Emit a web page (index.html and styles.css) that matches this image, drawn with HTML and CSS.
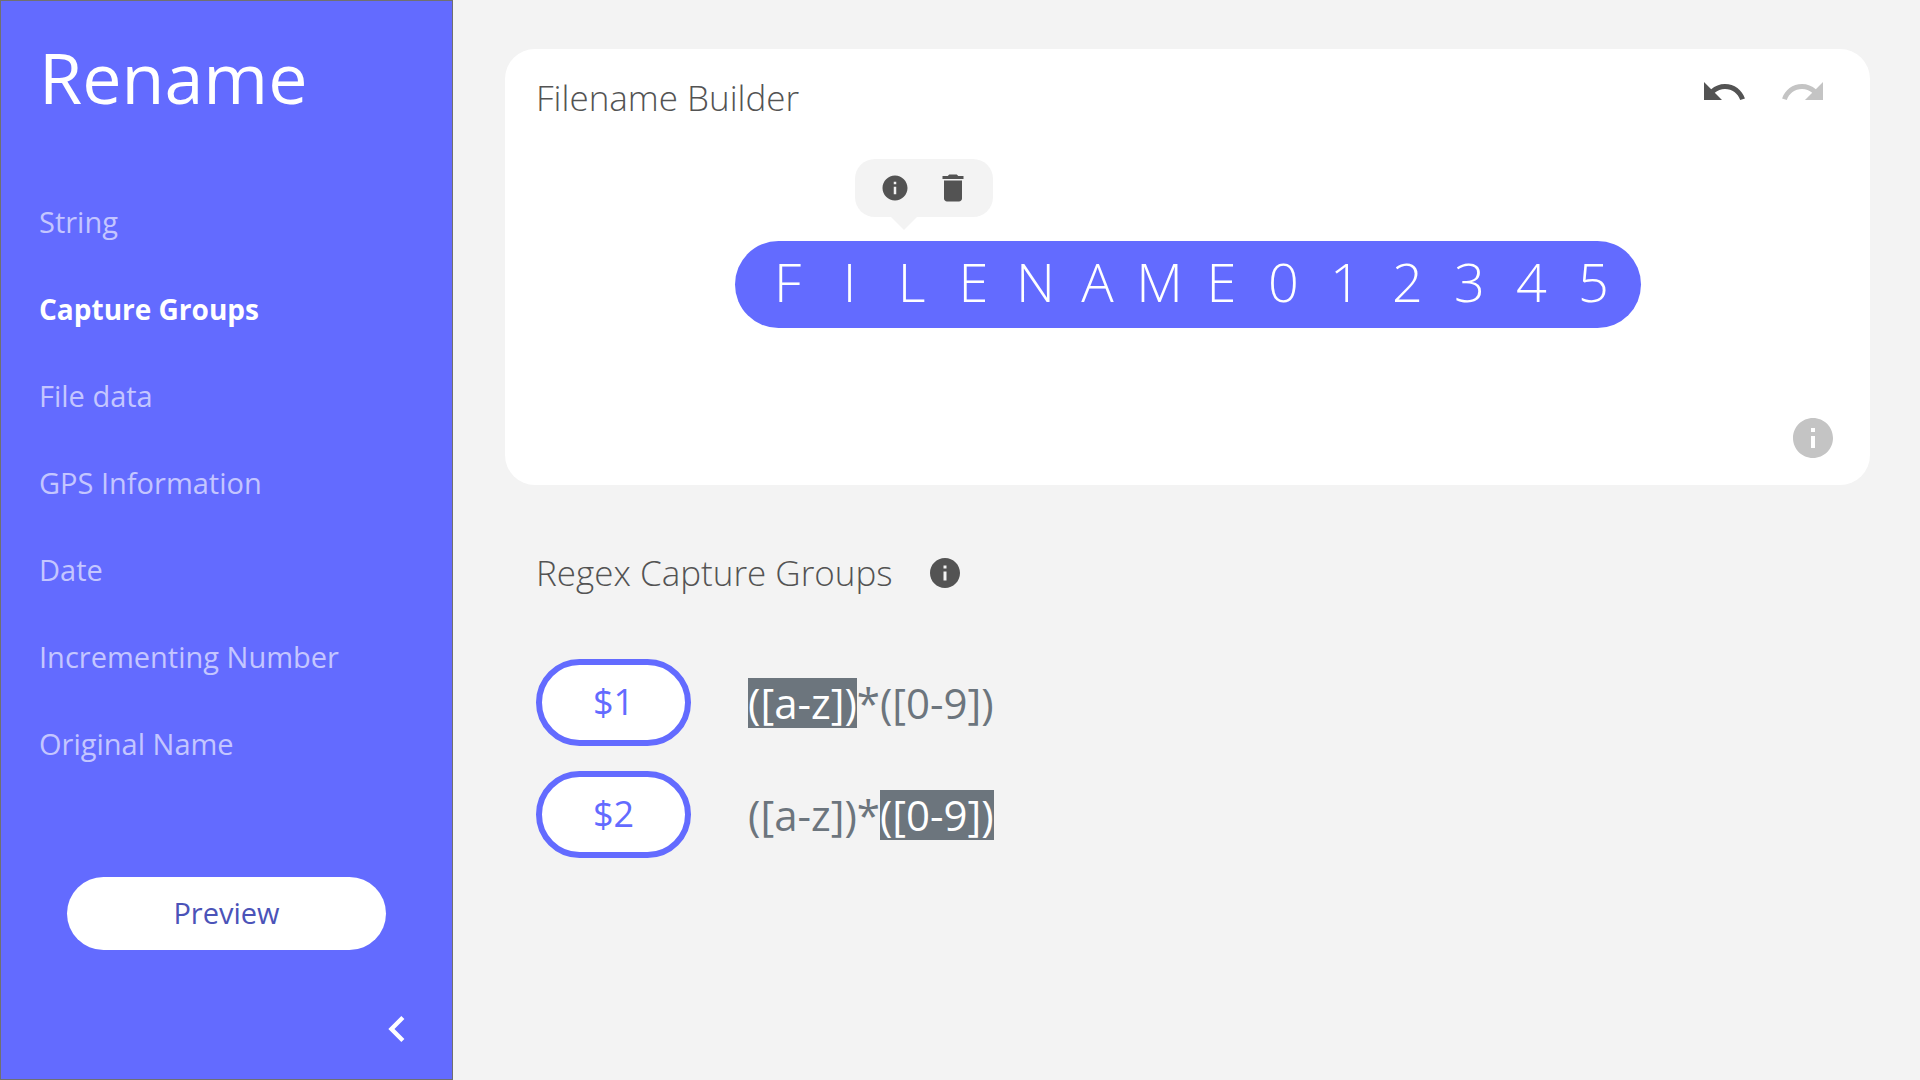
FILE: index.html
```html
<!DOCTYPE html>
<html lang="en">
<head>
<meta charset="utf-8">
<meta name="viewport" content="width=device-width, initial-scale=1">
<title>Rename</title>
<link rel="stylesheet" href="styles.css">
</head>
<body>
<svg class="sprite" aria-hidden="true">
  <symbol id="info" viewBox="0 0 24 24"><path d="M12 2C6.48 2 2 6.48 2 12s4.48 10 10 10 10-4.480 10-10S17.520 2 12 2zm1 15h-2v-6h2v6zm0-8h-2V7h2v2z"/></symbol>
  <symbol id="trash" viewBox="0 0 24 24"><path d="M6 19c0 1.100.9 2 2 2h8c1.100 0 2-.9 2-2V7H6v12zM19 4h-3.500l-1-1h-5l-1 1H5v2h14V4z"/></symbol>
  <symbol id="undo" viewBox="0 0 24 24"><path d="M12.500 8c-2.650 0-5.050.99-6.900 2.600L2 7v9h9l-3.620-3.620c1.390-1.160 3.160-1.880 5.120-1.880 3.540 0 6.550 2.310 7.600 5.500l2.370-.78C21.080 11.030 17.150 8 12.500 8z"/></symbol>
  <symbol id="redo" viewBox="0 0 24 24"><path d="M18.400 10.600C16.550 8.990 14.150 8 11.500 8c-4.650 0-8.580 3.030-9.960 7.220L3.900 16c1.050-3.190 4.050-5.500 7.600-5.500 1.950 0 3.730.72 5.120 1.880L13 16h9V7l-3.600 3.600z"/></symbol>
  <symbol id="chevron" viewBox="0 0 24 24"><path d="M15.410 7.410L14 6l-6 6 6 6 1.410-1.410L10.830 12z"/></symbol>
</svg>
<div class="app">
  <aside class="sidebar">
    <h1 class="title">Rename</h1>
    <nav class="nav" aria-label="Name parts">
      <a class="nav-link" href="#string">String</a>
      <a class="nav-link active" href="#capture" aria-current="page">Capture Groups</a>
      <a class="nav-link" href="#file">File data</a>
      <a class="nav-link" href="#gps">GPS Information</a>
      <a class="nav-link" href="#date">Date</a>
      <a class="nav-link" href="#number">Incrementing Number</a>
      <a class="nav-link" href="#original">Original Name</a>
    </nav>
    <div class="sidebar-foot">
      <button class="preview" type="button">Preview</button>
      <button class="icon-button collapse" type="button" aria-label="Collapse sidebar"><svg class="icon icon-xl"><use href="#chevron"/></svg></button>
    </div>
  </aside>
  <main class="main">
    <section class="card">
      <header class="card-head">
        <h2 class="heading">Filename Builder</h2>
        <div class="history">
          <button class="icon-button" type="button" aria-label="Undo"><svg class="icon icon-lg"><use href="#undo"/></svg></button>
          <button class="icon-button muted" type="button" aria-label="Redo"><svg class="icon icon-lg"><use href="#redo"/></svg></button>
        </div>
      </header>
      <div class="filename">
        <span class="char">F</span>
        <span class="char">I</span>
        <span class="char">L
          <span class="popover">
            <button class="icon-button" type="button" aria-label="Details"><svg class="icon icon-sm"><use href="#info"/></svg></button>
            <button class="icon-button" type="button" aria-label="Delete"><svg class="icon icon-md"><use href="#trash"/></svg></button>
          </span>
        </span>
        <span class="char">E</span>
        <span class="char">N</span>
        <span class="char">A</span>
        <span class="char">M</span>
        <span class="char">E</span>
        <span class="char">0</span>
        <span class="char">1</span>
        <span class="char">2</span>
        <span class="char">3</span>
        <span class="char">4</span>
        <span class="char">5</span>
      </div>
      <footer class="card-foot">
        <button class="icon-button muted" type="button" aria-label="Builder help"><svg class="icon icon-lg"><use href="#info"/></svg></button>
      </footer>
    </section>
    <section class="groups">
      <header class="groups-head">
        <h2 class="heading">Regex Capture Groups</h2>
        <button class="icon-button" type="button" aria-label="Capture group help"><svg class="icon icon-md"><use href="#info"/></svg></button>
      </header>
      <ul class="group-list">
        <li class="group"><button class="chip" type="button">$1</button><span class="regex"><mark class="match">([a-z])</mark>*([0-9])</span></li>
        <li class="group"><button class="chip" type="button">$2</button><span class="regex">([a-z])*<mark class="match">([0-9])</mark></span></li>
      </ul>
    </section>
  </main>
</div>
</body>
</html>
```
FILE: styles.css
```css
:root {
  --accent: #636bff;
  --ink: #535353;
  --surface: #f3f3f3;
  --slate: #6c757d;
}

* { box-sizing: border-box; }

body {
  margin: 0;
  background: var(--surface);
  color: var(--ink);
  font-family: "Open Sans", "Noto Sans", sans-serif;
}

button { font: inherit; cursor: pointer; }

.sprite { display: none; }

.icon { display: block; fill: currentColor; }
.icon-sm { width: 30px; height: 30px; }
.icon-md { width: 36px; height: 36px; }
.icon-lg { width: 48px; height: 48px; }
.icon-xl { width: 52px; height: 52px; }

.icon-button {
  padding: 0;
  border: 0;
  background: none;
  color: inherit;
}

.muted { color: #c4c4c4; }

.app { display: flex; min-height: 100vh; }

/* Sidebar */
.sidebar {
  display: flex;
  flex: 0 0 453px;
  flex-direction: column;
  padding: 28px 38px 24px;
  border: 1px solid #707070;
  background: var(--accent);
  color: #fff;
}

.title {
  margin: 0;
  font-size: 70px;
  font-weight: 500;
  line-height: 96px;
}

.nav {
  display: flex;
  flex-direction: column;
  gap: 47px;
  margin-top: 77px;
}

.nav-link {
  color: #c4c6ff;
  font-size: 29px;
  font-weight: 500;
  line-height: 40px;
  text-decoration: none;
}

.nav-link.active { color: #fff; font-size: 28px; font-weight: 700; }

.sidebar-foot {
  display: flex;
  flex-direction: column;
  gap: 53px;
  margin-top: auto;
}

.preview {
  height: 73px;
  margin: 0 28px;
  padding: 0 0 3px;
  border: 0;
  border-radius: 37px;
  background: #fff;
  color: #4b53b8;
  font-size: 29px;
}

.collapse { align-self: flex-end; margin-right: -9px; }

/* Builder */
.main { flex: 1; min-width: 0; padding: 49px 50px 49px 52px; }

.card {
  display: flex;
  flex-direction: column;
  min-height: 436px;
  padding: 19px 31px 23px;
  border-radius: 30px;
  background: #fff;
}

.card-head {
  display: flex;
  align-items: flex-start;
  justify-content: space-between;
}

.heading {
  margin: 0;
  font-size: 35px;
  font-weight: 300;
  line-height: 60px;
}

.history { display: flex; gap: 31px; padding-right: 12px; }

.filename {
  display: grid;
  grid-template-columns: repeat(14, 62px);
  align-self: center;
  height: 87px;
  margin-top: 113px;
  padding: 0 16px 0 22px;
  border-radius: 44px;
  background: var(--accent);
  color: #fff;
  font-size: 54px;
  font-weight: 300;
  line-height: 80px;
  text-align: center;
}

.char { position: relative; }

.popover {
  position: absolute;
  bottom: 111px;
  left: -26px;
  display: flex;
  align-items: center;
  gap: 25px;
  width: 138px;
  height: 58px;
  padding-left: 25px;
  border-radius: 20px;
  background: var(--surface);
  color: var(--ink);
}

.popover::after {
  position: absolute;
  top: 100%;
  left: 36px;
  border: 13px solid transparent;
  border-top-color: var(--surface);
  border-bottom: 0;
  content: "";
}

.card-foot {
  display: flex;
  justify-content: flex-end;
  margin-top: auto;
  padding-right: 2px;
}

/* Capture groups */
.groups { padding: 58px 31px 0; }

.groups-head { display: flex; align-items: center; gap: 34px; }

.group-list {
  display: grid;
  gap: 25px;
  margin: 0;
  padding: 56px 0 0;
  list-style: none;
}

.group { display: flex; align-items: center; gap: 57px; }

.chip {
  width: 155px;
  height: 87px;
  padding: 0 0 3px;
  border: 6px solid var(--accent);
  border-radius: 44px;
  background: #fff;
  color: var(--accent);
  font-size: 36px;
  font-weight: 500;
}

.regex {
  color: var(--slate);
  font-size: 42px;
  font-weight: 500;
  line-height: 50px;
}

.match {
  display: inline-block;
  background: var(--slate);
  color: #fff;
  line-height: 50px;
}
```
